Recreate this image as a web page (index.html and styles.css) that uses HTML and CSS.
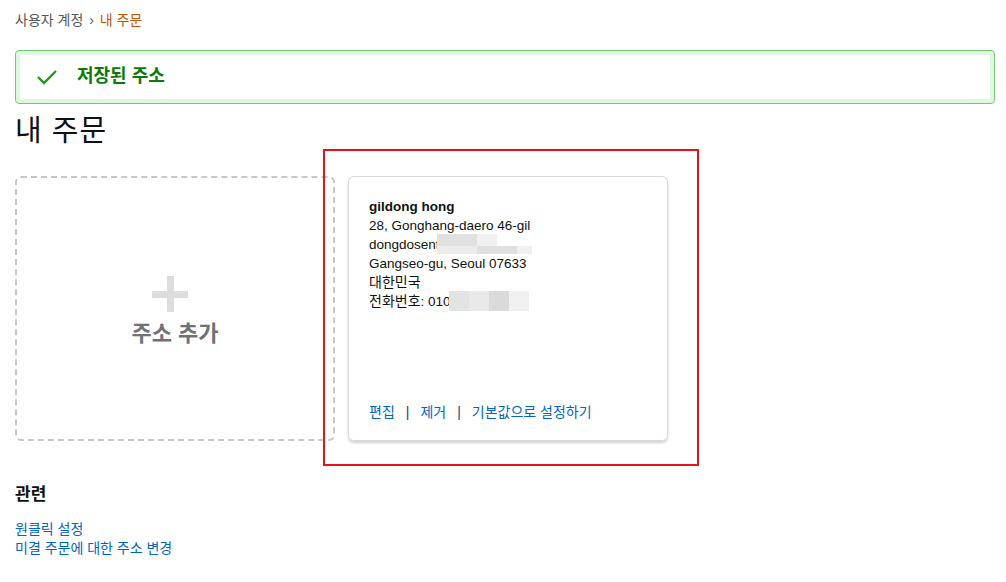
FILE: index.html
```html
<!DOCTYPE html>
<html lang="ko">
<head>
    <meta charset="UTF-8">
    <meta name="viewport" content="width=device-width, initial-scale=1.0">
    <title>내 주문</title>
    <link rel="stylesheet" href="styles.css">
</head>
<body>
    <div class="page">
        <div class="breadcrumb">
            <a href="#" class="crumb">사용자 계정</a>
            <span class="crumb-sep">›</span>
            <span class="crumb-current">내 주문</span>
        </div>

        <div class="alert">
            <svg class="alert-icon" width="22" height="16" viewBox="0 0 22 16">
                <path d="M2 8 L8 14 L20 2" fill="none" stroke="#1d9b1d" stroke-width="2.4"/>
            </svg>
            <span class="alert-text">저장된 주소</span>
        </div>

        <h1 class="title">내 주문</h1>

        <div class="address-row">
            <a href="#" class="add-box">
                <span class="plus"></span>
                <span class="add-label">주소 추가</span>
            </a>

            <div class="card">
                <div class="card-body">
                    <div class="name">gildong hong</div>
                    <div>28, Gonghang-daero 46-gil</div>
                    <div>dongdosent<span class="blur blur-a"></span></div>
                    <div>Gangseo-gu, Seoul 07633<span class="blur blur-b"></span></div>
                    <div class="ko">대한민국</div>
                    <div><span class="ko">전화번호</span>: 010<span class="blur blur-c"></span></div>
                </div>
                <div class="card-actions">
                    <a href="#">편집</a>
                    <span class="bar">|</span>
                    <a href="#">제거</a>
                    <span class="bar">|</span>
                    <a href="#">기본값으로 설정하기</a>
                </div>
            </div>

            <!-- annotation frame around the saved address -->
            <div class="mark"></div>
        </div>

        <div class="related">
            <h3 class="related-title">관련</h3>
            <a href="#">원클릭 설정</a>
            <a href="#">미결 주문에 대한 주소 변경</a>
        </div>
    </div>
</body>
</html>
```

FILE: styles.css
```css
body {
    margin: 0;
    font-family: "Liberation Sans", Arial, "Noto Sans CJK KR", sans-serif;
    font-size: 13.5px;
    line-height: 19px;
    color: #0f1111;
    background: #fff;
}
a {
    text-decoration: none;
    color: #0066c0;
}
.ko {
    font-size: 14px;
}
.page {
    padding: 11px 11px 0 15px;
}
.breadcrumb {
    font-size: 14px;
    color: #565959;
}
.crumb {
    color: #565959;
}
.crumb-sep {
    margin: 0 2px;
}
.crumb-current {
    color: #c45500;
}
.alert {
    margin-top: 20px;
    height: 52px;
    border: 1px solid #76c776;
    border-radius: 4px;
    box-shadow: inset 0 0 0 4px #dff7dc;
    display: flex;
    align-items: center;
    padding-left: 20px;
}
.alert-icon {
    margin-right: 19px;
    margin-top: -1px;
}
.alert-text {
    font-size: 18px;
    font-weight: bold;
    color: #0b7a0b;
    margin-top: -2px;
}
.title {
    margin: 7px 0 0 0;
    font-size: 29px;
    line-height: 40px;
    letter-spacing: 1px;
    font-weight: normal;
    color: #0f1111;
}
.address-row {
    position: relative;
    display: flex;
    gap: 13px;
    margin-top: 25px;
}
.add-box {
    width: 320px;
    height: 265px;
    box-sizing: border-box;
    border: 2px dashed #c7c7c7;
    border-radius: 6px;
    display: flex;
    flex-direction: column;
    align-items: center;
    justify-content: center;
    padding-top: 8px;
}
.plus {
    position: relative;
    width: 36px;
    height: 36px;
    margin: 0 10px 7px 0;
}
.plus::before,
.plus::after {
    content: "";
    position: absolute;
    background: #dddddd;
}
.plus::before {
    left: 0;
    top: 15px;
    width: 36px;
    height: 7px;
}
.plus::after {
    left: 15px;
    top: 0;
    width: 7px;
    height: 36px;
}
.add-label {
    font-size: 22px;
    line-height: 30px;
    font-weight: bold;
    color: #6f7373;
}
.card {
    width: 320px;
    height: 265px;
    box-sizing: border-box;
    border: 1px solid #d5d9d9;
    border-radius: 6px;
    box-shadow: 0 2px 3px rgba(0, 0, 0, 0.18);
    padding: 20px 20px 18px 20px;
    display: flex;
    flex-direction: column;
    justify-content: space-between;
}
.card-body div {
    white-space: nowrap;
    position: relative;
}
.name {
    font-weight: bold;
}
.blur {
    position: absolute;
    display: block;
}
.blur-a {
    left: 68px;
    top: -1px;
    width: 60px;
    height: 19px;
    background: linear-gradient(90deg, #e1e1e1 0 40px, #f0f0f0 40px);
}
.blur-b {
    left: 68px;
    top: -8px;
    width: 95px;
    height: 8px;
    background: linear-gradient(90deg, #ececec 0 40px, #e0e0e0 40px 80px, #f0f0f0 80px);
}
.blur-c {
    left: 80px;
    top: -1px;
    width: 80px;
    height: 20px;
    background: linear-gradient(90deg, #e3e3e3 0 20px, #e9e9e9 20px 40px, #dadada 40px 60px, #f0f0f0 60px);
}
.card-actions {
    display: flex;
    gap: 11px;
    font-size: 14px;
}
.bar {
    color: #1d3f73;
}
.mark {
    position: absolute;
    left: 308px;
    top: -27px;
    width: 372px;
    height: 313px;
    border: 2px solid #e3151a;
    pointer-events: none;
}
.related {
    margin-top: 42px;
    display: flex;
    flex-direction: column;
    font-size: 14px;
}
.related-title {
    margin: 0 0 13px 0;
    font-size: 17px;
    line-height: 24px;
    font-weight: bold;
}
```
